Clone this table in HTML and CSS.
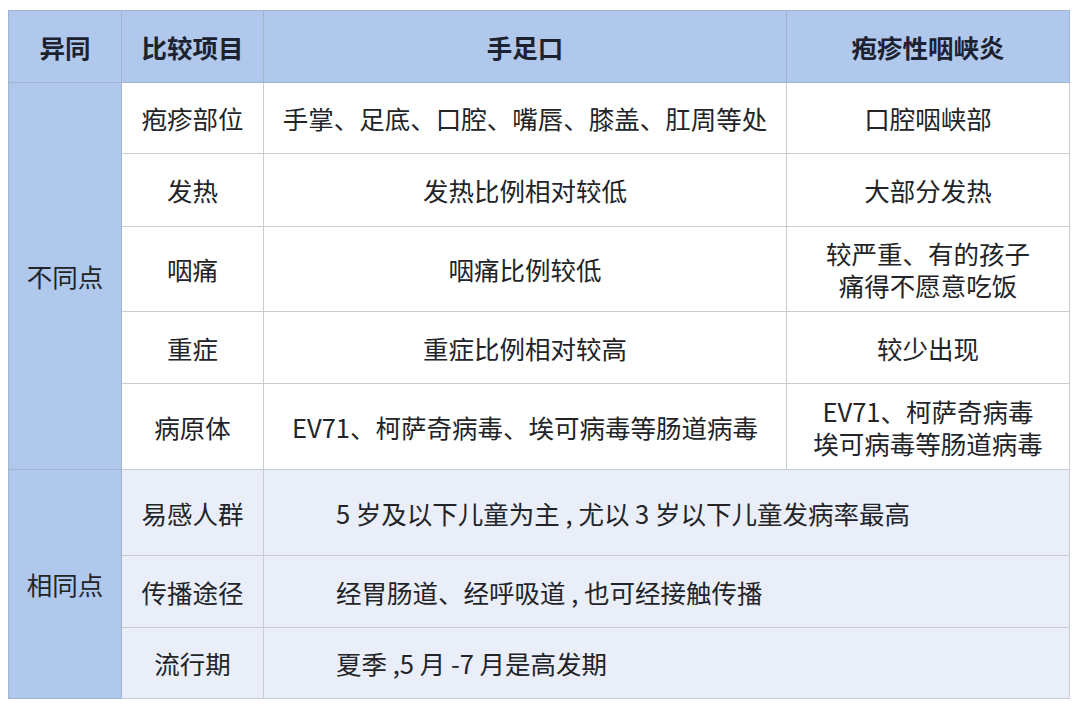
FILE: index.html
```html
<!DOCTYPE html>
<html lang="zh">
<head>
<meta charset="utf-8">
<title>手足口与疱疹性咽峡炎</title>
<link rel="stylesheet" href="styles.css">
</head>
<body>
<table class="cmp">
  <colgroup>
    <col class="c1"><col class="c2"><col class="c3"><col class="c4">
  </colgroup>
  <thead>
    <tr class="h-head">
      <th>异同</th><th>比较项目</th><th>手足口</th><th>疱疹性咽峡炎</th>
    </tr>
  </thead>
  <tbody>
    <tr class="h71">
      <td class="grp" rowspan="5">不同点</td>
      <td>疱疹部位</td><td>手掌、足底、口腔、嘴唇、膝盖、肛周等处</td><td>口腔咽峡部</td>
    </tr>
    <tr class="h73"><td>发热</td><td>发热比例相对较低</td><td>大部分发热</td></tr>
    <tr class="h85"><td>咽痛</td><td>咽痛比例较低</td><td><span class="ln">较严重、有的孩子</span><span class="ln">痛得不愿意吃饭</span></td></tr>
    <tr class="h72"><td>重症</td><td>重症比例相对较高</td><td>较少出现</td></tr>
    <tr class="h86"><td>病原体</td><td>EV71、柯萨奇病毒、埃可病毒等肠道病毒</td><td><span class="ln">EV71、柯萨奇病毒</span><span class="ln">埃可病毒等肠道病毒</span></td></tr>
    <tr class="same h86">
      <td class="grp" rowspan="3">相同点</td>
      <td>易感人群</td><td class="wide" colspan="2">5 岁及以下儿童为主 , 尤以 3 岁以下儿童发病率最高</td>
    </tr>
    <tr class="same h72"><td>传播途径</td><td class="wide" colspan="2">经胃肠道、经呼吸道 , 也可经接触传播</td></tr>
    <tr class="same h71"><td>流行期</td><td class="wide" colspan="2">夏季 ,5 月 -7 月是高发期</td></tr>
  </tbody>
</table>
</body>
</html>
```

FILE: styles.css
```css
html, body {
  margin: 0;
  background: #ffffff;
}
body {
  padding: 10px 0 0 8px;
  font-family: "Noto Sans CJK SC", "Noto Sans", sans-serif;
  color: #222428;
}
.cmp {
  border-collapse: collapse;
  table-layout: fixed;
  width: 1061px;
  font-size: 25.5px;
  border: 1px solid #a9b0bc;
}
.c1 { width: 113px; }
.c2 { width: 142px; }
.c3 { width: 523px; }
.c4 { width: 283px; }
.cmp th, .cmp td {
  border: 1px solid #c9ccd2;
  text-align: center;
  vertical-align: middle;
  padding: 0;
  line-height: 32px;
}
.ln {
  display: block;
  line-height: 32px;
}
.cmp th {
  background: #b0c8ec;
  font-weight: 700;
  color: #1c2230;
  border-color: #a4b4cc;
}
.h-head { height: 72px; }
.h71 { height: 71px; }
.h72 { height: 72px; }
.h73 { height: 73px; }
.h85 { height: 85px; }
.h86 { height: 86px; }
.cmp td.grp {
  background: #b0c8ec;
  border-color: #a4b4cc;
}
.same td {
  background: #e9eef9;
}
.cmp td.wide {
  text-align: left;
  padding-left: 72px;
}
```
